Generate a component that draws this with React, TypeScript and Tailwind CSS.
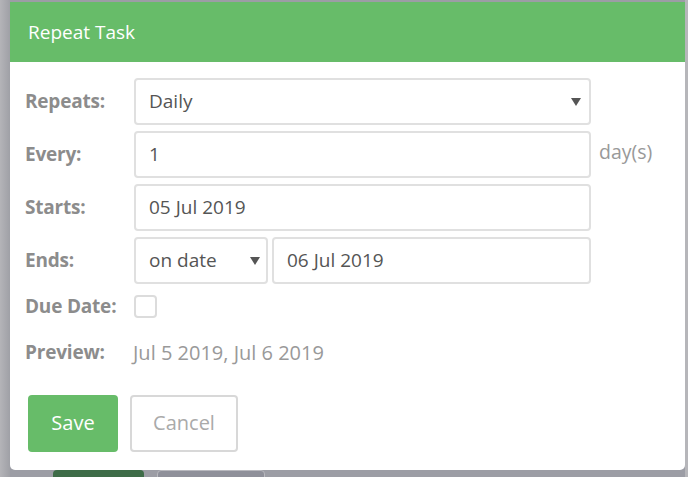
import React from 'react';

const font = { fontFamily: '"Open Sans", "Segoe UI", sans-serif' };

const Caret = () => (
  <svg width="10" height="8" viewBox="0 0 10 8" className="shrink-0">
    <path d="M0 0 L10 0 L5 8 Z" fill="#555" />
  </svg>
);

const Label: React.FC<{ children: React.ReactNode }> = ({ children }) => (
  <div className="w-[109px] shrink-0 text-[19px] font-bold text-[#8c8c8c] tracking-[-0.2px]">{children}</div>
);

const Box: React.FC<{ className?: string; children?: React.ReactNode }> = ({ className = '', children }) => (
  <div className={`h-[47px] flex items-center rounded-[4px] border-2 border-[#e0e0e0] bg-white px-[13px] text-[19px] text-[#555] ${className}`}>
    {children}
  </div>
);

export default function App() {
  return (
    <div className="relative w-[688px] h-[477px] overflow-hidden bg-[#9c9da5]" style={font}>
      {/* page behind the overlay */}
      <div className="absolute left-0 top-0 w-[10px] h-full bg-gradient-to-r from-[#b4b4b8] to-[#9fa0a6]" />
      <div className="absolute left-[685px] top-0 w-[3px] h-full bg-[#b6b6ba]" />
      <div className="absolute left-[53px] top-[470px] w-[91px] h-[20px] rounded-[4px] bg-[#3e6c48]" />
      <div className="absolute left-[157px] top-[470px] w-[108px] h-[20px] rounded-[4px] border border-[#b8b8be] bg-[#8f909a]" />

      <div className="relative ml-[10px] mt-[2px] w-[675px] h-[468px] bg-white rounded-b-[5px] flex flex-col">
        <div className="h-[60px] bg-[#67bc69] flex items-center px-[18px] text-[19px] text-white">Repeat Task</div>

        <div className="flex flex-col pl-[15px] pt-[16px]">
          <div className="flex items-center">
            <Label>Repeats:</Label>
            <Box className="w-[457px] justify-between pr-[8px]">
              <span>Daily</span>
              <Caret />
            </Box>
          </div>

          <div className="flex items-center mt-[6px]">
            <Label>Every:</Label>
            <Box className="w-[457px]">1</Box>
            <div className="self-start ml-[8px] mt-[6px] text-[19.5px] text-[#999]">day(s)</div>
          </div>

          <div className="flex items-center mt-[6px]">
            <Label>Starts:</Label>
            <Box className="w-[457px]">05 Jul 2019</Box>
          </div>

          <div className="flex items-center mt-[6px]">
            <Label>Ends:</Label>
            <Box className="w-[134px] justify-between pr-[6px]">
              <span>on date</span>
              <Caret />
            </Box>
            <Box className="w-[319px] ml-[4px]">06 Jul 2019</Box>
          </div>

          <div className="flex items-center mt-[8px]">
            <Label>Due Date:</Label>
            <div className="w-[23px] h-[23px] rounded-[4px] border-2 border-[#dcdcdc] bg-white" />
          </div>

          <div className="flex items-center mt-[17px]">
            <Label>Preview:</Label>
            <div className="text-[20px] text-[#999] -ml-[1px]">Jul 5 2019, Jul 6 2019</div>
          </div>

          <div className="flex items-center gap-[12px] mt-[27px] ml-[3px]">
            <button className="w-[90px] h-[57px] rounded-[4px] bg-[#67bc69] text-white text-[20px]">Save</button>
            <button className="w-[108px] h-[57px] rounded-[4px] border-2 border-[#d8d8d8] bg-white text-[#aaa] text-[20px]">Cancel</button>
          </div>
        </div>
      </div>
    </div>
  );
}
